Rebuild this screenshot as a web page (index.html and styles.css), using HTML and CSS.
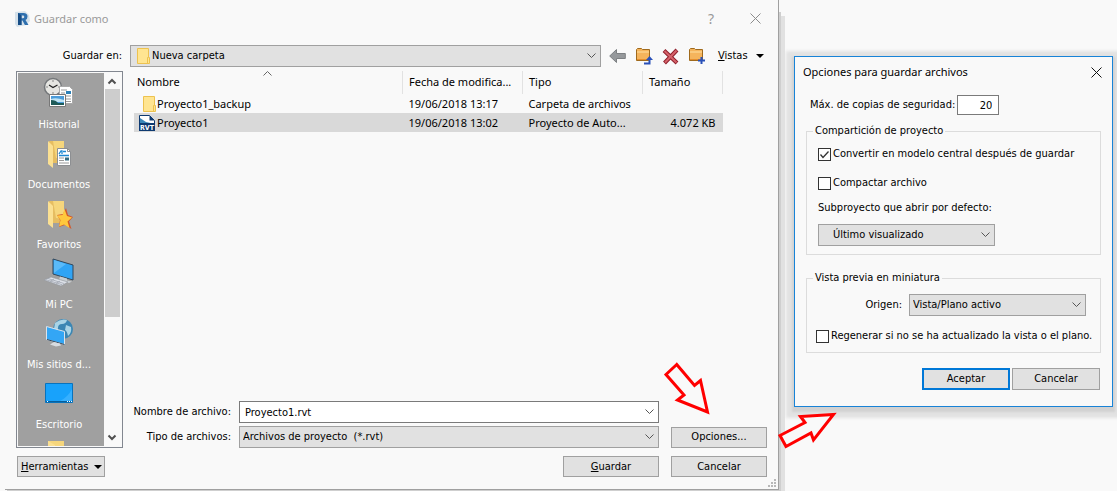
FILE: index.html
```html
<!DOCTYPE html>
<html lang="es">
<head>
    <meta charset="UTF-8">
    <meta name="viewport" content="width=device-width, initial-scale=1.0">
    <title>Guardar como</title>
    <link rel="stylesheet" href="styles.css">
</head>
<body>
    <div class="desktop">
        <form class="window save-window">
            <header class="titlebar">
                <svg class="app-icon" width="16" height="16" viewBox="0 0 16 16">
                    <path d="M1 1l10-1 4 4 1 6-4 4-9 2-2-3z" fill="#d5e1ea"/>
                    <path d="M4 2h5.500q4 0 4 3.500 0 2.500-2 3.400l3 5h-3.600L8.500 9.500H7.500V14H4zM7.500 4.600v2.700h1.300q1.500 0 1.500-1.400T8.800 4.600z" fill="#2e6fae" fill-rule="evenodd"/>
                    <path d="M4 2l3.500 2.600V14H4z" fill="#174d86"/>
                </svg>
                <h1>Guardar como</h1>
                <button type="button" class="caption-button help" aria-label="Ayuda">?</button>
                <button type="button" class="caption-button" aria-label="Cerrar">
                    <svg width="11" height="11" viewBox="0 0 11 11"><path d="M.5.5l10 10M10.500.5l-10 10" stroke="#8c8c8c" fill="none"/></svg>
                </button>
            </header>

            <div class="location">
                <label for="folder">Guardar en:</label>
                <div class="folder-box">
                    <svg class="folder-icon" width="13" height="16" viewBox="0 0 13 16"><path d="M.5.5h11v9h1v6H.5z" fill="#ffe591" stroke="#edc24f"/><path d="M10.500 15V9.500h1" fill="none" stroke="#edc24f"/></svg>
                    <select id="folder"><option>Nueva carpeta</option></select>
                </div>
                <div class="toolbar">
                    <button type="button" aria-label="Atrás">
                        <svg width="17" height="16" viewBox="0 0 17 16"><path d="M.7 8L7.500 1.500V5.500h8.800v5H7.500v4z" fill="#96999c" stroke="#7d8083"/></svg>
                    </button>
                    <button type="button" aria-label="Subir un nivel">
                        <svg width="18" height="18" viewBox="0 0 18 18"><path d="M1.500 13.500V2.500l1-1h4l1 1h7v11z" fill="#f5b45c" stroke="#a06a1c"/><path d="M2 5h12" stroke="#ffe0a0"/><path d="M2 12.500h12" stroke="#e58e2e"/><path d="M9 16.500h5.500V12" fill="none" stroke="#2950b8" stroke-width="2"/><path d="M11 13l3.500-4 3.500 4z" fill="#2950b8"/></svg>
                    </button>
                    <button type="button" aria-label="Eliminar">
                        <svg width="17" height="17" viewBox="0 0 17 17"><path d="M2 2.500l13 12.500M15 2L2.500 15" stroke="#8e1f2b" stroke-width="4"/><path d="M2.500 3l12 11.500M14.500 2.500L3 14.500" stroke="#d5626a" stroke-width="2"/></svg>
                    </button>
                    <button type="button" aria-label="Nueva carpeta">
                        <svg width="18" height="18" viewBox="0 0 18 18"><path d="M1.500 13.500V2.500l1-1h4l1 1h7v11z" fill="#f5b45c" stroke="#a06a1c"/><path d="M2 5h12" stroke="#ffe0a0"/><path d="M2 12.500h12" stroke="#e58e2e"/><path d="M13.500 10v7M10 13.500h7" stroke="#2950b8" stroke-width="2"/></svg>
                    </button>
                    <button type="button" class="views"><span><u>V</u>istas</span><i class="caret"></i></button>
                </div>
            </div>

            <div class="content">
                <div class="side">
                    <div class="places">
                        <nav class="places-list">
                            <a href="#" class="place">
                                <svg width="32" height="32" viewBox="0 0 32 32">
                                    <circle cx="10" cy="10" r="8.500" fill="#e6e6e2" stroke="#74777a" stroke-width="1.500"/>
                                    <path d="M10 3v2M10 15v2M3 10h2M15 10h2" stroke="#888"/>
                                    <path d="M6 8l4 2.500L14.500 8" fill="none" stroke="#222" stroke-width="1.200"/>
                                    <path d="M16.500 9.500h10l3 3v14h-13z" fill="#fff" stroke="#a9a9a9"/>
                                    <path d="M18 13h6M18 16h4M18 19h10M18 22h10M18 24.500h10" stroke="#999"/>
                                    <path d="M23 14h5v3h-5z" fill="#2d81b8"/>
                                    <path d="M6.500 17.500h16v12h-16z" fill="#fff" stroke="#777"/>
                                    <path d="M8 19h13v9H8z" fill="#4b9cd9"/>
                                    <path d="M8 22q5-2 13 1v2H8z" fill="#bfe3f4"/>
                                    <path d="M8 23q5 0 7 3h6v2H8z" fill="#1d5a58"/>
                                </svg>
                                <span>Historial</span>
                            </a>
                            <a href="#" class="place">
                                <svg width="32" height="32" viewBox="0 0 32 32">
                                    <path d="M6 4h15v22H10z" fill="#e6bd61"/><path d="M10 4h11v18l-8-1z" fill="#f6d67c"/><path d="M5 4l5 5v22l-5-4z" fill="#fbe092"/>
                                    <path d="M14.500 11.500h10l3 3v14h-13z" fill="#fff" stroke="#8d8f92"/>
                                    <path d="M24.500 11.500v3h3" fill="none" stroke="#8d8f92"/>
                                    <path d="M16 17l2-3h1v3M20 14.500h3M16 18.500h10" stroke="#1e88d2" stroke-width="1.300" fill="none"/>
                                    <path d="M16 21h5M16 23.500h5M16 26h10" stroke="#9a9a9a"/><path d="M22 20.500h4v3h-4z" fill="#356d84"/>
                                </svg>
                                <span>Documentos</span>
                            </a>
                            <a href="#" class="place">
                                <svg width="32" height="32" viewBox="0 0 32 32">
                                    <path d="M6 4h15v22H10z" fill="#e6bd61"/><path d="M10 4h11v18l-8-1z" fill="#f6d67c"/><path d="M5 4l5 5v22l-5-4z" fill="#fbe092"/>
                                    <path d="M23 11l2 7 5 2-4 4.500L28.500 32 22 28l-6 2 1-7-3-5 6-1z" fill="#d2582c"/>
                                    <path d="M21.500 12l2.500 7 5 1.500-4.500 4L26.500 31l-5.500-3.500-5 2 1.500-6.500-3.500-4.500 5.500-.5z" fill="#ffc83d"/>
                                </svg>
                                <span>Favoritos</span>
                            </a>
                            <a href="#" class="place">
                                <svg width="32" height="32" viewBox="0 0 32 32">
                                    <path d="M10 2l20 6v15l-20-6z" fill="#30a4f5" stroke="#33475a"/><path d="M11 3l12 4-12 9z" fill="#5abaf9"/>
                                    <path d="M17 19.500l7 2v2l5 1-3 1.500-10-3z" fill="#c9ced2"/>
                                    <path d="M1 23l7-3 17 5-7 4z" fill="#dde1e8" stroke="#8e949b" stroke-width=".6"/>
                                    <path d="M5 21.500l16 5M3 22.700l16 5M7 24.500l4-2.500M13 26.500l4-2.500" stroke="#989ea9" stroke-width=".7"/>
                                </svg>
                                <span>Mi PC</span>
                            </a>
                            <a href="#" class="place">
                                <svg width="32" height="32" viewBox="0 0 32 32">
                                    <circle cx="20" cy="12" r="10" fill="#3b86b3"/><path d="M12 6q6-5 12-3-1 4-5 4t-4 4-4 1zM23 8l5 2q1 6-3 9-1-5-3-6z" fill="#a9d4e6"/>
                                    <path d="M3.500 9.500l18 5v13l-18-5z" fill="#33a6f5" stroke="#dbe4ec"/><path d="M4 22.500l17.500 5" stroke="#33475a"/>
                                    <path d="M11 25l6 1.500 1 2-5 1-6-2z" fill="#d8dce0"/>
                                </svg>
                                <span>Mis sitios d...</span>
                            </a>
                            <a href="#" class="place">
                                <svg width="32" height="32" viewBox="0 0 32 32">
                                    <path d="M2.500 6.500h27v19h-27z" fill="#18a2fb" stroke="#0873bd"/><path d="M17 24q8-4 12-12v12z" fill="#36b0ff"/>
                                    <path d="M3 24.500h26" stroke="#075f9c"/><path d="M4 24.500h1M24 24.500h1M26 24.500h1M28 24.500h1" stroke="#fff"/>
                                </svg>
                                <span>Escritorio</span>
                            </a>
                            <a href="#" class="place" aria-label="Carpeta">
                                <svg width="32" height="32" viewBox="0 0 32 32"><path d="M5 4h16v26H5z" fill="#f6d67c"/><path d="M5 4l7 4v24l-7-4z" fill="#fbe092"/></svg>
                            </a>
                        </nav>
                        <div class="scrollbar">
                            <svg width="16" height="16" viewBox="0 0 16 16"><path d="M3.500 10.500L7 7l3.500 3.500" stroke="#505050" stroke-width="2" fill="none"/></svg>
                            <div class="scroll-track"><div class="scroll-thumb"></div></div>
                            <svg width="16" height="16" viewBox="0 0 16 16"><path d="M3.500 5.500L7 9l3.500-3.500" stroke="#505050" stroke-width="2" fill="none"/></svg>
                        </div>
                    </div>
                    <button type="button" class="btn tools"><span><u>H</u>erramientas</span><i class="caret"></i></button>
                </div>

                <div class="main">
                    <table class="files">
                        <colgroup><col><col class="col-meta"><col class="col-meta"><col class="col-size"></colgroup>
                        <thead>
                            <tr>
                                <th>Nombre<svg class="sort" width="9" height="5" viewBox="0 0 9 5"><path d="M.5 4.500l4-4 4 4" stroke="#666" fill="none"/></svg></th>
                                <th>Fecha de modifica...</th>
                                <th>Tipo</th>
                                <th>Tamaño</th>
                            </tr>
                        </thead>
                        <tbody>
                            <tr>
                                <td><div class="file"><svg width="20" height="16" viewBox="0 0 20 16"><path d="M6.500.5h11v9h1v6h-12z" fill="#ffe591" stroke="#edc24f"/><path d="M16.500 15V9.500h1" fill="none" stroke="#edc24f"/></svg>Proyecto1_backup</div></td>
                                <td>19/06/2018 13:17</td>
                                <td>Carpeta de archivos</td>
                                <td></td>
                            </tr>
                            <tr class="selected">
                                <td><div class="file"><svg width="20" height="16" viewBox="0 0 20 16"><path d="M2.500.5h10l5 5v10h-15z" fill="#fff" stroke="#0e3a70"/><path d="M3 3l6 4 9 2H3z" fill="#3a87b8"/><path d="M12.500.5v5h5z" fill="#0e3a70"/><path d="M2 8h16v8H2z" fill="#0e3a70"/><text x="10" y="15" class="rvt">RVT</text></svg>Proyecto1</div></td>
                                <td>19/06/2018 13:02</td>
                                <td>Proyecto de Auto...</td>
                                <td class="size">4.072 KB</td>
                            </tr>
                        </tbody>
                    </table>

                    <div class="fields">
                        <label for="filename">Nombre de archivo:</label>
                        <input id="filename" class="combo" type="text" value="Proyecto1.rvt">
                        <span></span>
                        <label for="filetype">Tipo de archivos:</label>
                        <select id="filetype"><option>Archivos de proyecto&nbsp; (*.rvt)</option></select>
                        <button type="button" class="btn">Opciones...</button>
                    </div>
                    <div class="actions">
                        <button type="submit" class="btn"><span><u>G</u>uardar</span></button>
                        <button type="button" class="btn">Cancelar</button>
                    </div>
                </div>
            </div>

            <svg class="grip" width="8" height="8" viewBox="0 0 8 8"><path d="M6 0h2v2H6zM3 3h2v2H3zM6 3h2v2H6zM0 6h2v2H0zM3 6h2v2H3zM6 6h2v2H6z" fill="#b8b8b8"/></svg>
            <svg class="arrows" width="178" height="90" viewBox="0 0 178 90">
                <g fill="#f9f9f9" stroke="#f00" stroke-width="3">
                    <path d="M14.700 4.500L4 14.500l18 20.500-6.500 5L45.500 52 38.500 20.500l-6 5z"/>
                    <path d="M118 75.500l6 11 25-13.500 2.500 7L171.500 54.500l-33 2 4.500 6z"/>
                </g>
            </svg>
        </form>

        <form class="window options-window">
            <header class="titlebar">
                <h2>Opciones para guardar archivos</h2>
                <button type="button" class="caption-button" aria-label="Cerrar">
                    <svg width="11" height="11" viewBox="0 0 11 11"><path d="M.5.5l10 10M10.500.5l-10 10" stroke="#111" fill="none"/></svg>
                </button>
            </header>
            <div class="backups">
                <label for="backups">Máx. de copias de seguridad:</label>
                <input id="backups" type="text" value="20">
            </div>
            <fieldset>
                <legend>Compartición de proyecto</legend>
                <label class="check"><input type="checkbox" checked>Convertir en modelo central después de guardar</label>
                <label class="check"><input type="checkbox">Compactar archivo</label>
                <label for="workset" class="caption">Subproyecto que abrir por defecto:</label>
                <select id="workset" class="workset"><option>Último visualizado</option></select>
            </fieldset>
            <fieldset class="preview">
                <legend>Vista previa en miniatura</legend>
                <div class="source">
                    <label for="source">Origen:</label>
                    <select id="source"><option>Vista/Plano activo</option></select>
                </div>
                <label class="check"><input type="checkbox">Regenerar si no se ha actualizado la vista o el plano.</label>
            </fieldset>
            <div class="options-actions">
                <button type="submit" class="btn default">Aceptar</button>
                <button type="button" class="btn">Cancelar</button>
            </div>
        </form>
    </div>
</body>
</html>
```
FILE: styles.css
```css
:root {
    --ui-font: "DejaVu Sans Condensed", "DejaVu Sans", sans-serif;
    --shell-font: "Noto Sans", "Open Sans", sans-serif;
    --face: #f9f9f9;
    --control: #e1e1e1;
    --control-border: #a0a0a0;
    --accent: #0078d7;
    --chevron: url("data:image/svg+xml,%3Csvg xmlns='http://www.w3.org/2000/svg' width='9' height='6'%3E%3Cpath d='M.5.5l4 4 4-4' fill='none' stroke='%23555'/%3E%3C/svg%3E");
}

* {
    box-sizing: border-box;
}

body {
    margin: 0;
    background: var(--face);
    color: #000;
    font: 11px/14px var(--ui-font);
}

button,
input,
select {
    margin: 0;
    font: inherit;
    color: inherit;
}

.desktop {
    display: flex;
    align-items: flex-start;
    gap: 15px;
    height: 100vh;
    padding: 0 4px 1px 5px;
    overflow: hidden;
}

.window {
    position: relative;
    background: var(--face);
}

.save-window {
    display: flex;
    flex-direction: column;
    flex: 1;
    align-self: stretch;
    padding: 0 11px 12px;
    border: solid var(--control-border);
    border-width: 0 1px 1px 0;
    box-shadow: 2px 12px #cfcfcf, 6px 16px #e1e1e1;
}

/* title bars */
.titlebar {
    display: flex;
    align-items: center;
}

.save-window .titlebar {
    gap: 4px;
    height: 45px;
    padding: 0 6px 8px 0;
}

.app-icon {
    margin-left: -2px;
}

.titlebar h1,
.titlebar h2 {
    flex: 1;
    margin: 0;
    font: 11px/16px var(--shell-font);
}

.save-window h1,
.help {
    color: #999;
}

.caption-button {
    display: flex;
    padding: 0;
    border: 0;
    background: none;
}

.help {
    margin-right: 32px;
    font: 14px/16px var(--shell-font);
}

/* shared controls */
select,
.combo {
    width: 100%;
    height: 22px;
    padding: 0 24px 0 3px;
    border: 1px solid var(--control-border);
    border-radius: 0;
    appearance: none;
    background: var(--control) var(--chevron) no-repeat right 4px center;
}

.combo {
    padding-left: 5px;
    border-color: #7a7a7a;
    background-color: #fff;
}

.btn {
    width: 96px;
    height: 21px;
    padding: 0;
    border: 1px solid var(--control-border);
    background: var(--control);
}

.btn.default {
    border: 2px solid var(--accent);
}

.caret {
    border: solid transparent;
    border-width: 4px 4px 0;
    border-top-color: #000;
}

/* location row */
.location {
    display: flex;
    align-items: center;
    height: 22px;
    margin-bottom: 4px;
}

.location > label {
    width: 106px;
    margin-right: 8px;
    text-align: right;
}

.folder-box {
    position: relative;
    flex: 1;
}

.folder-box select {
    display: block;
    padding-left: 21px;
}

.folder-icon {
    position: absolute;
    top: 3px;
    left: 7px;
}

.toolbar {
    display: flex;
    align-items: center;
    gap: 9px;
    width: 166px;
    padding-left: 8px;
}

.toolbar button {
    display: flex;
    padding: 0;
    border: 0;
    background: none;
}

.toolbar .views {
    flex: 1;
    align-items: center;
    justify-content: space-between;
    padding: 0 3px;
}

/* body of the save window */
.content {
    display: flex;
    flex: 1;
    gap: 11px;
    min-height: 0;
}

.side {
    display: flex;
    flex-direction: column;
    gap: 8px;
    width: 107px;
}

.places {
    display: flex;
    flex: 1;
    min-height: 0;
    padding: 1px;
    border: 1px solid #828790;
}

.places-list {
    flex: 1;
    padding-top: 2px;
    overflow: hidden;
    background: #a0a0a0;
}

.place {
    display: flex;
    flex-direction: column;
    align-items: center;
    gap: 9px;
    height: 60px;
    padding: 2px 4px 0 0;
    color: #fff;
    text-decoration: none;
}

.place svg {
    flex: none;
}

.scrollbar {
    display: flex;
    flex-direction: column;
    width: 17px;
    padding: 0 1px;
}

.scroll-track {
    flex: 1;
}

.scroll-thumb {
    height: 67%;
    background: #cdcdcd;
}

.tools {
    display: flex;
    align-items: center;
    justify-content: space-between;
    width: 88px;
    margin-left: 1px;
    padding: 0 2px 0 3px;
}

.main {
    display: flex;
    flex-direction: column;
    flex: 1;
}

/* file list */
.files {
    width: calc(100% - 44px);
    table-layout: fixed;
    border-collapse: collapse;
    font: 11px/16px var(--shell-font);
}

.col-meta {
    width: 120px;
}

.col-size {
    width: 80px;
}

.files th {
    position: relative;
    height: 23px;
    padding: 0 0 2px 6px;
    border-right: 1px solid #e2e2e2;
    font-weight: 400;
    text-align: left;
    white-space: nowrap;
}

.files th:first-child {
    padding-left: 3px;
}

.sort {
    position: absolute;
    top: 0;
    left: 48%;
}

.files td {
    height: 19px;
    padding: 0 0 0 6px;
    white-space: nowrap;
}

.files td:first-child {
    padding-left: 3px;
}

.files .size {
    padding-right: 7px;
    text-align: right;
}

.file {
    display: flex;
    align-items: center;
}

.selected {
    background: #d9d9d9;
}

.rvt {
    fill: #fff;
    font: bold 7px "DejaVu Sans Condensed", sans-serif;
    text-anchor: middle;
}

/* file name and type */
.fields {
    display: grid;
    grid-template-columns: 97px 1fr 96px;
    align-items: center;
    column-gap: 8px;
    row-gap: 3px;
    margin-top: auto;
}

.fields label {
    justify-self: end;
    white-space: nowrap;
}

.fields .combo,
.fields select {
    width: calc(100% - 4px);
}

.actions {
    display: flex;
    justify-content: flex-end;
    gap: 12px;
    margin-top: 8px;
}

.grip {
    position: absolute;
    right: 2px;
    bottom: 2px;
}

/* callout arrows lie over both windows */
.arrows {
    position: absolute;
    right: -62px;
    bottom: 39px;
    z-index: 2;
}

/* options window */
.options-window {
    flex: none;
    width: 319px;
    margin-top: 56px;
    padding: 0 11px 16px;
    border: 1px solid #1883d7;
    box-shadow: 0 3px 2px 2px #d2d2d2, 0 3px 3px 8px #e2e2e2;
}

.options-window .titlebar {
    height: 30px;
    margin: 0 -1px 8px -3px;
}

.backups {
    display: flex;
    align-items: center;
    gap: 2px;
    margin: 0 0 9px 4px;
}

.backups input {
    width: 42px;
    height: 20px;
    padding: 0 6px;
    border: 1px solid #7a7a7a;
    background: #fff;
    text-align: right;
}

fieldset {
    display: flex;
    flex-direction: column;
    align-items: flex-start;
    min-width: 0;
    height: 131px;
    margin: 0;
    padding: 9px 11px 0;
    border: 1px solid #dcdcdc;
}

legend {
    margin-left: -5px;
    padding: 0 2px;
}

.check {
    display: flex;
    align-items: center;
    gap: 2px;
    height: 14px;
    margin-bottom: 15px;
    white-space: nowrap;
}

.check input {
    width: 13px;
    height: 13px;
    margin: 0;
    border: 1px solid #333;
    appearance: none;
    background: #fff;
}

.check input:checked {
    background: #fff url("data:image/svg+xml,%3Csvg xmlns='http://www.w3.org/2000/svg' width='11' height='11'%3E%3Cpath d='M1.500 5.500l2.500 3 5.500-6' fill='none' stroke='%23333' stroke-width='1.300'/%3E%3C/svg%3E") no-repeat center;
}

.caption {
    margin: -4px 0 9px;
}

.workset,
.source select {
    width: 177px;
}

.workset {
    padding-left: 14px;
}

.preview {
    height: 82px;
    margin-top: 16px;
    padding-left: 9px;
}

.preview legend {
    margin-left: -3px;
}

.source {
    display: flex;
    align-items: center;
    align-self: flex-end;
    gap: 7px;
    margin: 0 3px 13px 0;
}

.options-actions {
    display: flex;
    justify-content: flex-end;
    gap: 2px;
    margin: 15px 1px 0 0;
}

.options-actions .btn {
    width: 88px;
    height: 22px;
}
```
